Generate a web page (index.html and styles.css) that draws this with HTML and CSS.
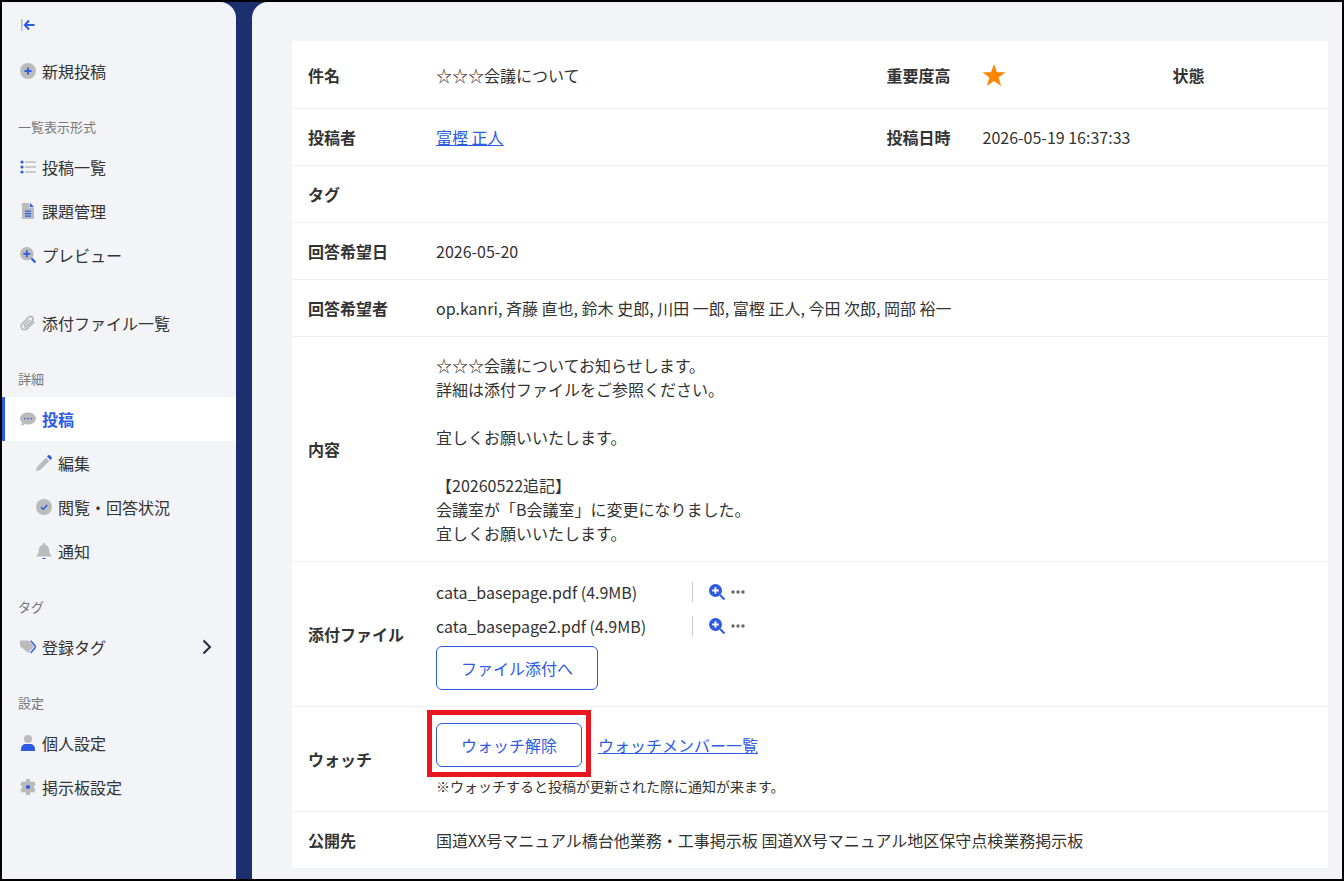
FILE: index.html
```html
<!DOCTYPE html>
<html lang="ja">
<head>
<meta charset="utf-8">
<title>投稿</title>
<link rel="stylesheet" href="styles.css">
</head>
<body>
<div class="frame">
  <aside class="sidebar">
    <div class="collapse">
      <svg class="ic" viewBox="0 0 16 16"><rect x="1" y="2" width="1.600" height="12" fill="#bbb"/><path d="M14.500 8H5M9 3.500 4.800 8 9 12.500" fill="none" stroke="#2d5be3" stroke-width="2"/></svg>
    </div>
    <a class="item"><svg class="ic" viewBox="0 0 16 16"><circle cx="8" cy="8" r="8" fill="#bbb"/><path d="M8 4.500v7M4.500 8h7" stroke="#2d5be3" stroke-width="1.800"/></svg>新規投稿</a>
    <div class="label">一覧表示形式</div>
    <a class="item"><svg class="ic" viewBox="0 0 16 16"><path d="M5 3h11M5 8h11M5 13h11" stroke="#bbb" stroke-width="1.700"/><circle cx="2" cy="3" r="1.600" fill="#2d5be3"/><circle cx="2" cy="8" r="1.600" fill="#2d5be3"/><circle cx="2" cy="13" r="1.600" fill="#2d5be3"/></svg>投稿一覧</a>
    <a class="item"><svg class="ic" viewBox="0 0 16 16"><path d="M3.200 0h6.300v4.500H14v10.300c0 .7-.5 1.200-1.200 1.200H3.200C2.500 16 2 15.500 2 14.800V1.200C2 .5 2.500 0 3.200 0z" fill="#bbb"/><path d="M10 0l4 4h-4z" fill="#2d5be3"/><path d="M5 8.200h6M5 10.700h6M5 13.200h6" stroke="#2d5be3" stroke-width="1.200"/></svg>課題管理</a>
    <a class="item"><svg class="ic" viewBox="0 0 16 16"><circle cx="6.800" cy="6.800" r="6.800" fill="#bbb"/><path d="M6.800 3.300v7M3.300 6.800h7" stroke="#2d5be3" stroke-width="1.800"/><path d="m11.300 11.300 4.200 4.200" stroke="#2d5be3" stroke-width="2.200"/></svg>プレビュー</a>
    <a class="item item-gap"><svg class="ic" viewBox="0 0 16 16"><path d="M14.300 6.500 7.500 13.300c-1.800 1.800-4.300 1.800-5.500.5S.8 10 2.500 8.300l6-6c1.200-1.200 2.800-1.200 3.800-.2s1 2.600-.2 3.800l-5.500 5.500c-.6.600-1.400.6-1.900.1s-.5-1.300.1-1.900L9.500 4.800" fill="none" stroke="#bbb" stroke-width="1.800"/></svg>添付ファイル一覧</a>
    <div class="label">詳細</div>
    <a class="item active"><svg class="ic" viewBox="0 0 16 16"><path d="M8 1.500c4.400 0 8 2.700 8 6s-3.600 6-8 6c-1 0-2-.1-2.900-.4C4 14 2.300 14.800.6 14.800c1-.9 1.600-1.900 1.800-3C.9 10.800 0 9.200 0 7.500c0-3.300 3.600-6 8-6z" fill="#bbb"/><path d="M4 7.600h1.500M7.300 7.600h1.500M10.600 7.600h1.500" stroke="#2d5be3" stroke-width="1.300"/></svg>投稿</a>
    <a class="item sub"><svg class="ic" viewBox="0 0 16 16"><path d="M10 2.500 13.500 6 3.800 15.200 0 16l.8-3.800z" fill="#bbb"/><path d="m11 1.500.9-.9c.7-.7 1.500-.7 2.100-.1l1.500 1.500c.6.600.6 1.400-.1 2.100l-.9.900z" fill="#2d5be3"/></svg>編集</a>
    <a class="item sub"><svg class="ic" viewBox="0 0 16 16"><circle cx="8" cy="8" r="8" fill="#bbb"/><path d="m5 8 2.200 2.200L11.200 6" fill="none" stroke="#2d5be3" stroke-width="1.500"/></svg>閲覧・回答状況</a>
    <a class="item sub"><svg class="ic" viewBox="0 0 16 16"><path d="M8 0c.7 0 1.200.5 1.200 1.200v.6c2.500.5 3.900 2.500 3.900 5 0 3.200.9 4.300 2.200 5.400v1.300H.7v-1.300C2 11.100 2.900 10 2.900 6.800c0-2.500 1.400-4.500 3.900-5v-.6C6.800.5 7.300 0 8 0z" fill="#bbb"/><path d="M6 15h4c-.2.700-1 1-2 1s-1.800-.3-2-1z" fill="#2d5be3"/></svg>通知</a>
    <div class="label">タグ</div>
    <a class="item"><svg class="ic" viewBox="0 0 16 16"><path d="M1.200 1.500h6.800c.5 0 .9.200 1.200.5l4 4.700c.4.500.4 1.100 0 1.600l-3.900 4.800c-.5.600-1.300.6-1.800.1L.4 7.500C.1 7.200 0 6.900 0 6.500v-3.800C0 2 .5 1.500 1.200 1.500z" fill="#bbb"/><path d="m10.800 1.800 4.400 5.400c.3.400.3.900 0 1.300l-4.500 5.500" fill="none" stroke="#2d5be3" stroke-width="1.400"/></svg>登録タグ<svg class="chev" viewBox="0 0 10 16"><path d="m1.500 1.500 6.500 6.500-6.500 6.500" fill="none" stroke="#1f2a44" stroke-width="2"/></svg></a>
    <div class="label">設定</div>
    <a class="item"><svg class="ic" viewBox="0 0 16 16"><circle cx="8" cy="4" r="4" fill="#bbb"/><path d="M1 16v-2C1 11 3.500 9 5.500 9h5c2 0 4.500 2 4.500 5v2z" fill="#2d5be3"/></svg>個人設定</a>
    <a class="item"><svg class="ic" viewBox="0 0 16 16"><path d="M6.200 0h3.600l.5 2.300 1.300.8 2.300-.8 1.800 3.100-1.700 1.600v2l1.700 1.600-1.800 3.100-2.300-.8-1.300.8-.5 2.300H6.200l-.5-2.300-1.300-.8-2.300.8L.3 10.600 2 9V7L.3 5.400l1.800-3.100 2.300.8 1.300-.8z" fill="#bbb"/><circle cx="8" cy="8" r="2.100" fill="#2d5be3"/></svg>掲示板設定</a>
  </aside>
  <main class="main">
    <section class="card">
      <div class="row row-top">
        <div class="key">件名</div>
        <div class="val val-wide">☆☆☆会議について</div>
        <div class="key key-mid">重要度高</div>
        <div class="val val-mid"><svg class="star" viewBox="0 0 24 24"><path d="m12 1 3 8.200h8.500l-6.900 5.300 2.600 8.500-7.200-5.100L4.800 23l2.600-8.500L.5 9.200H9z" fill="#ff8400"/></svg></div>
        <div class="key">状態</div>
      </div>
      <div class="row">
        <div class="key">投稿者</div>
        <div class="val val-wide"><a class="link">富樫 正人</a></div>
        <div class="key key-mid">投稿日時</div>
        <div class="val val-mid">2026-05-19 16:37:33</div>
      </div>
      <div class="row"><div class="key">タグ</div><div class="val"></div></div>
      <div class="row"><div class="key">回答希望日</div><div class="val">2026-05-20</div></div>
      <div class="row"><div class="key">回答希望者</div><div class="val">op.kanri, 斉藤 直也, 鈴木 史郎, 川田 一郎, 富樫 正人, 今田 次郎, 岡部 裕一</div></div>
      <div class="row">
        <div class="key">内容</div>
        <div class="val">☆☆☆会議についてお知らせします。<br>詳細は添付ファイルをご参照ください。<br><br>宜しくお願いいたします。<br><br>【20260522追記】<br>会議室が「B会議室」に変更になりました。<br>宜しくお願いいたします。</div>
      </div>
      <div class="row">
        <div class="key">添付ファイル</div>
        <div class="val files">
          <div class="file">
            <span class="file-name">cata_basepage.pdf (4.9MB)</span>
            <span class="file-act">
              <svg class="ic" viewBox="0 0 16 16"><circle cx="6.500" cy="6.500" r="6.500" fill="#2d5be3"/><path d="M6.500 3.200v6.600M3.200 6.500h6.600" stroke="#fff" stroke-width="1.800"/><path d="m11 11 4.500 4.500" stroke="#2d5be3" stroke-width="2"/></svg>
              <svg class="dots" viewBox="0 0 14 4"><circle cx="2" cy="2" r="1.700" fill="#666"/><circle cx="7" cy="2" r="1.700" fill="#666"/><circle cx="12" cy="2" r="1.700" fill="#666"/></svg>
            </span>
          </div>
          <div class="file">
            <span class="file-name">cata_basepage2.pdf (4.9MB)</span>
            <span class="file-act">
              <svg class="ic" viewBox="0 0 16 16"><circle cx="6.500" cy="6.500" r="6.500" fill="#2d5be3"/><path d="M6.500 3.200v6.600M3.200 6.500h6.600" stroke="#fff" stroke-width="1.800"/><path d="m11 11 4.500 4.500" stroke="#2d5be3" stroke-width="2"/></svg>
              <svg class="dots" viewBox="0 0 14 4"><circle cx="2" cy="2" r="1.700" fill="#666"/><circle cx="7" cy="2" r="1.700" fill="#666"/><circle cx="12" cy="2" r="1.700" fill="#666"/></svg>
            </span>
          </div>
          <a class="btn">ファイル添付へ</a>
        </div>
      </div>
      <div class="row">
        <div class="key">ウォッチ</div>
        <div class="val">
          <div class="watch">
            <span class="marked"><a class="btn">ウォッチ解除</a></span>
            <a class="link">ウォッチメンバー一覧</a>
          </div>
          <div class="note">※ウォッチすると投稿が更新された際に通知が来ます。</div>
        </div>
      </div>
      <div class="row row-last">
        <div class="key">公開先</div>
        <div class="val">国道XX号マニュアル橋台他業務・工事掲示板 国道XX号マニュアル地区保守点検業務掲示板</div>
      </div>
    </section>
  </main>
</div>
</body>
</html>
```
FILE: styles.css
```css
* { box-sizing: border-box; }
html, body { margin: 0; height: 100%; }
body {
  font-family: "Noto Sans CJK JP", "Noto Sans", sans-serif;
  font-size: 16px;
  line-height: 24px;
  color: #333;
  overflow: hidden;
}
.frame {
  display: flex;
  height: 881px;
  border: 2px solid #000;
  background: #1c2f6e;
  overflow: hidden;
}
.sidebar {
  flex: 0 0 234px;
  background: #f2f4f8;
  border-top-right-radius: 16px;
}
.collapse {
  display: flex;
  align-items: center;
  height: 47px;
  padding-left: 18px;
  padding-bottom: 2px;
}
.ic { flex: none; width: 16px; height: 16px; }
.item {
  display: flex;
  align-items: center;
  gap: 6px;
  height: 44px;
  padding-left: 18px;
  padding-right: 24px;
}
.item-gap { margin-top: 24px; }
.item.sub { padding-left: 34px; }
.item.active {
  background: #fff;
  box-shadow: inset 3px 0 0 #2d5be3;
  color: #2d5be3;
  font-weight: 700;
}
.chev { width: 10px; height: 16px; margin-left: auto; }
.label {
  padding: 23.5px 0 8.5px 16px;
  font-size: 13px;
  line-height: 20px;
  color: #777;
}
.main {
  flex: 1;
  margin-left: 16px;
  padding: 39px 14px 11px 40px;
  background: #f2f4f8;
  border-top-left-radius: 16px;
}
.card { background: #fff; }
.row {
  display: flex;
  align-items: center;
  padding: 16px 0 16px 16px;
  border-bottom: 1px solid #f0f1f4;
}
.row-top { padding-top: 22px; padding-bottom: 21px; }
.row-last { border-bottom: 0; }
.key { flex: 0 0 128px; font-weight: 700; white-space: nowrap; }
.key-mid { flex-basis: 96px; }
.val { flex: 1; min-width: 0; min-height: 24px; }
.val-wide { flex: 0 0 450.5px; }
.val-mid { flex: 0 0 190px; display: flex; align-items: center; }
.star { width: 24px; height: 24px; margin-left: -0.5px; }
.link { color: #2d5be3; text-decoration: underline; }
.files { display: flex; flex-direction: column; gap: 6px; align-items: flex-start; }
.file { display: flex; align-items: center; height: 28px; }
.file-name { width: 256px; }
.file-act {
  display: flex;
  align-items: center;
  gap: 6px;
  height: 20px;
  padding-left: 16px;
  border-left: 1px solid #ccc;
}
.dots { width: 14px; height: 4px; }
.btn {
  display: inline-flex;
  align-items: center;
  height: 44px;
  padding: 0 24px;
  border: 1px solid #2d5be3;
  border-radius: 6px;
  color: #2d5be3;
  background: #fff;
}
.watch { display: flex; align-items: center; gap: 16px; }
.marked { position: relative; display: flex; }
.marked::after {
  content: "";
  position: absolute;
  inset: -13px -9px -10px;
  border: 5px solid #e8171f;
  pointer-events: none;
}
.note { margin-top: 10px; font-size: 14px; line-height: 18px; }
```
